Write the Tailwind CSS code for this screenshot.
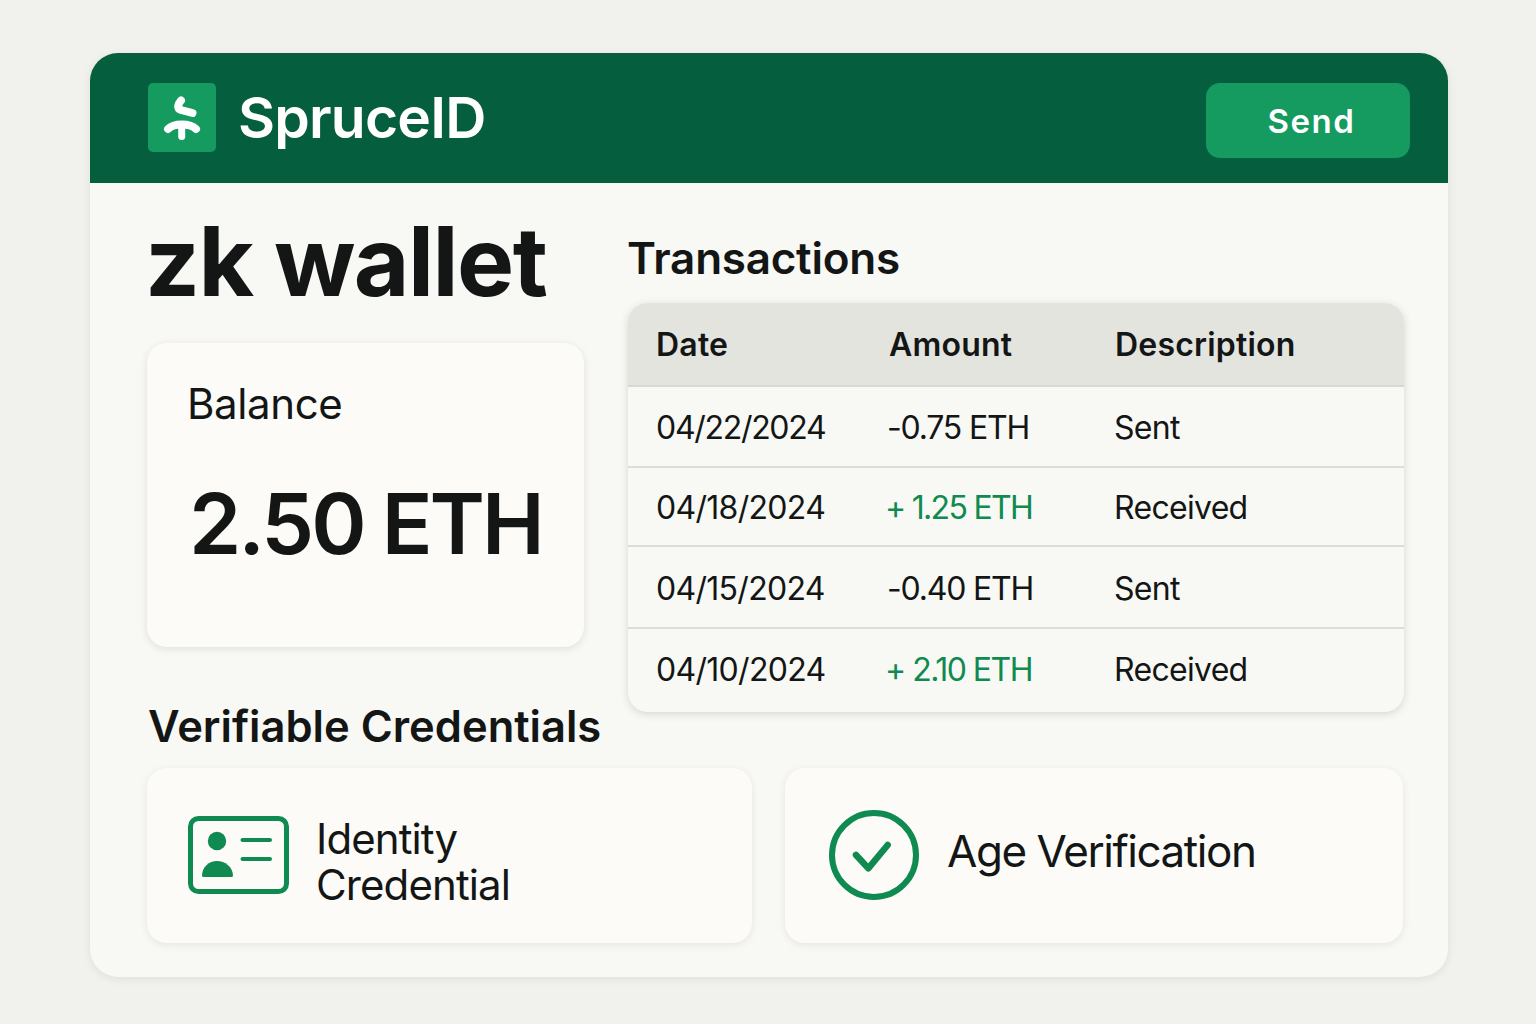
<!DOCTYPE html>
<html lang="en">
<head>
    <meta charset="UTF-8">
    <meta name="viewport" content="width=device-width, initial-scale=1.0">
    <title>SpruceID - zk wallet</title>
    <script src="https://cdn.jsdelivr.net/npm/@tailwindcss/browser@4"></script>
</head>
<body class="bg-[#f1f1ee] font-[Inter,'Liberation_Sans',sans-serif] text-[#131615]">
    <div class="w-[1536px] h-[1024px] pt-[53px] pl-[90px] overflow-hidden">
        <div class="w-[1358px] h-[924px] bg-[#f8f8f4] rounded-[28px] shadow-[0_2px_10px_rgba(0,0,0,0.08)] overflow-hidden">
            <!-- header -->
            <div class="h-[130px] bg-[#055f3e] flex items-start justify-between pt-[30px] pl-[58px] pr-[38px]">
                <div class="flex items-center gap-[22px]">
                    <div class="w-[68px] h-[69px] bg-[#159a5f] rounded-[5px]">
                        <svg viewBox="0 0 68 69" class="w-[68px] h-[69px]" fill="none" stroke="#fff" stroke-width="8" stroke-linecap="round" stroke-linejoin="round">
                            <path d="M33 17.5C30 21 28.5 25.5 33 27L44.5 30"/>
                            <path d="M20 46C23.5 42.5 28 41.5 33.7 41.5S44.5 42.5 48 46"/>
                            <path d="M33.7 41.5V53.5" stroke-width="7"/>
                        </svg>
                    </div>
                    <div class="text-[57px] leading-[68px] font-semibold text-white tracking-[-0.8px]">SpruceID</div>
                </div>
                <button class="w-[204px] h-[75px] pl-[7px] pt-[2px] bg-[#159a5f] rounded-[14px] text-white text-[33px] font-semibold tracking-[1.5px]">Send</button>
            </div>

            <!-- body -->
            <div class="pl-[57px] pr-[44px]">
                <div class="flex gap-[44px] items-start">
                    <div class="w-[437px] shrink-0">
                        <div class="h-[160px] -ml-[2px] text-[96px] leading-[156px] font-bold tracking-[-1.5px] whitespace-nowrap">zk wallet</div>
                        <div class="h-[304px] bg-[#fcfbf8] rounded-[20px] shadow-[0_2px_8px_rgba(0,0,0,0.1)] pt-[36px] pl-[40px]">
                            <div class="text-[42px] leading-[50px] tracking-[-0.4px]">Balance</div>
                            <div class="mt-[45px] ml-[2px] text-[84px] leading-[100px] font-semibold tracking-[-3px] whitespace-nowrap">2.50 ETH</div>
                        </div>
                        <div class="mt-[54px] text-[43.5px] leading-[50px] font-semibold whitespace-nowrap pl-[1px]">Verifiable Credentials</div>
                    </div>
                    <div class="w-[776px] shrink-0">
                        <div class="h-[120px] pt-[45px] -ml-[1px] text-[44px] leading-[60px] font-semibold tracking-[-0.25px]">Transactions</div>
                        <div class="bg-[#f8f8f4] rounded-[20px] shadow-[0_2px_8px_rgba(0,0,0,0.14)] overflow-hidden text-[32px] tracking-[-0.7px]">
                            <div class="h-[84px] pt-[2px] bg-[#e4e4df] border-b-2 border-[#d9d9d4] grid grid-cols-[231px_227px_1fr] items-center pl-[28px] font-semibold tracking-[0.2px]">
                                <div>Date</div><div class="pl-[2px]">Amount</div><div class="pl-[1px]">Description</div>
                            </div>
                            <div class="h-[81px] pt-[2px] border-b-2 border-[#dcdcd8] grid grid-cols-[231px_227px_1fr] items-center pl-[28px]">
                                <div class="tracking-[-1.3px]">04/22/2024</div><div class="tracking-[-1.2px]">-0.75 ETH</div><div>Sent</div>
                            </div>
                            <div class="h-[79px] pt-[2px] border-b-2 border-[#dcdcd8] grid grid-cols-[231px_227px_1fr] items-center pl-[28px]">
                                <div>04/18/2024</div><div class="text-[#0f8a50] -ml-[2px] tracking-[-1.7px]">+ 1.25 ETH</div><div>Received</div>
                            </div>
                            <div class="h-[82px] pt-[3px] border-b-2 border-[#dcdcd8] grid grid-cols-[231px_227px_1fr] items-center pl-[28px]">
                                <div>04/15/2024</div><div class="tracking-[-1.2px]">-0.40 ETH</div><div>Sent</div>
                            </div>
                            <div class="h-[83px] pb-[2px] grid grid-cols-[231px_227px_1fr] items-center pl-[28px]">
                                <div>04/10/2024</div><div class="text-[#0f8a50] -ml-[2px] tracking-[-1.5px]">+ 2.10 ETH</div><div>Received</div>
                            </div>
                        </div>
                    </div>
                </div>

                <!-- credentials -->
                <div class="flex gap-[33px] mt-[17px]">
                    <div class="w-[605px] h-[175px] bg-[#fcfbf8] rounded-[20px] shadow-[0_2px_8px_rgba(0,0,0,0.08)] flex items-center pl-[41px] gap-[27px]">
                        <svg viewBox="0 0 101 78" class="w-[101px] h-[78px] shrink-0 -mt-[1px]" fill="none">
                            <rect x="2.5" y="2.5" width="96" height="73" rx="8" stroke="#0f8a50" stroke-width="5"/>
                            <circle cx="29" cy="25" r="9.2" fill="#0f8a50"/>
                            <path d="M14 60C14 51 21 45 29 45S45 51 45 60Q45 61 43 61H16Q14 61 14 60Z" fill="#0f8a50"/>
                            <path d="M54.5 24H82M54.5 43H82" stroke="#0f8a50" stroke-width="4" stroke-linecap="round"/>
                        </svg>
                        <div class="text-[42px] leading-[46px] tracking-[-0.9px] mt-[12px]">Identity<br>Credential</div>
                    </div>
                    <div class="w-[618px] h-[175px] bg-[#fcfbf8] rounded-[20px] shadow-[0_2px_8px_rgba(0,0,0,0.08)] flex items-center pl-[44px] gap-[28px]">
                        <svg viewBox="0 0 90 90" class="w-[90px] h-[90px] shrink-0 -mt-[2px]" fill="none" stroke="#0f8a50">
                            <circle cx="45" cy="45" r="42" stroke-width="6"/>
                            <path d="M27 45L39.3 58.3L58.7 35" stroke-width="6.5" stroke-linecap="round" stroke-linejoin="round"/>
                        </svg>
                        <div class="text-[44px] leading-[50px] tracking-[-1.45px] -mt-[10px]">Age Verification</div>
                    </div>
                </div>
            </div>
        </div>
    </div>
</body>
</html>
